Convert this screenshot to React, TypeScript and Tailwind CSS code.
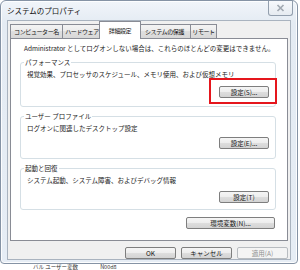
import type { ReactNode } from 'react';

const jp = "font-['Noto_Sans_CJK_JP','Noto_Sans',sans-serif]";

function Btn({ children, className = '', disabled = false }: { children: ReactNode; className?: string; disabled?: boolean }) {
  return (
    <div
      className={`h-[12px] flex items-center justify-center whitespace-nowrap rounded-[2px] border text-[6.5px] leading-none ${
        disabled
          ? 'border-[#b8bcc0] bg-[#f4f4f4] text-[#8f8f8f]'
          : 'border-[#7e7e7e] bg-[linear-gradient(#f5f5f5,#ededed_50%,#dedede_50%,#d3d3d3)] text-[#141414]'
      } ${className}`}
    >
      {children}
    </div>
  );
}

function Tab({ label, className = '', active = false }: { label: string; className?: string; active?: boolean }) {
  const base = 'flex items-center justify-center whitespace-nowrap border border-b-0 border-[#898c95] text-[6px] leading-none tracking-[-0.4px] text-[#111]';
  if (active) {
    return <div className={`relative z-10 -mb-px h-[18px] bg-white ${base} ${className}`}>{label}</div>;
  }
  return (
    <div className={`h-[14px] bg-[linear-gradient(#f3f3f3,#ebebeb_50%,#dfdfdf_50%,#d8d8d8)] ${base} ${className}`}>
      {label}
    </div>
  );
}

export default function App() {
  return (
    <div className={`w-[300px] h-[270px] bg-white overflow-hidden ${jp}`}>
      {/* window frame */}
      <div className="w-[298px] h-[264px] flex flex-col rounded-t-[6px] rounded-b-[4px] border border-[#8593a5] bg-[linear-gradient(#f1f5fa,#e4ebf3_22px,#e6edf5)] shadow-[inset_0_0_0_1px_rgba(255,255,255,0.85)]">
        {/* title bar */}
        <div className="h-[19px] shrink-0 flex items-start">
          <div className="pl-[6px] pt-[6px] text-[7.5px] leading-none text-[#111]">システムのプロパティ</div>
          <div className="ml-auto mr-[4px] w-[25px] h-[15px] flex items-center justify-center rounded-b-[3px] border border-t-0 border-[#939fae] bg-[linear-gradient(#f7f9fc,#e6ebf1)]">
            <svg width="9" height="8" viewBox="0 0 9 8">
              <path d="M1.5 1 L7.5 7 M7.5 1 L1.5 7" stroke="#a2a9b2" strokeWidth="1.7" />
            </svg>
          </div>
        </div>

        {/* client area */}
        <div className="mx-[6px] mb-[3px] flex-1 flex flex-col px-[2px] pt-[1px] border border-[#a9b3bf] bg-[#f0f0f0]">
          {/* tabs */}
          <div className="relative z-10 h-[16px] flex items-end">
            <Tab label="コンピューター名" className="w-[53px]" />
            <Tab label="ハードウェア" className="-ml-px w-[40px]" />
            <Tab label="詳細設定" active className="-ml-[3px] w-[42px]" />
            <Tab label="システムの保護" className="-ml-[3px] w-[53px]" />
            <Tab label="リモート" className="-ml-px w-[27px]" />
          </div>

          {/* tab panel */}
          <div className="h-[203px] border border-[#898c95] bg-white text-[6.5px] leading-[8px] text-[#1a1a1a]">
            <div className="pt-[5px] pl-[13px] whitespace-nowrap">Administrator としてログオンしない場合は、これらのほとんどの変更はできません。</div>

            <fieldset className="mt-[6px] ml-[9px] w-[256px] h-[49px] rounded-[3px] border border-[#d5dfe5] px-[6px]">
              <legend className="ml-[-3px] px-[1px] leading-[8px]">パフォーマンス</legend>
              <div className="mt-[4px]">視覚効果、プロセッサのスケジュール、メモリ使用、および仮想メモリ</div>
              <div className="mt-[8px] flex justify-end">
                <div className="relative">
                  <Btn className="w-[50px]">設定(S)...</Btn>
                  <div className="absolute -left-[10px] -top-[8px] w-[68px] h-[26px] border-2 border-[#e5161d]" />
                </div>
              </div>
            </fieldset>

            <fieldset className="mt-[5px] ml-[9px] w-[256px] h-[47px] rounded-[3px] border border-[#d5dfe5] px-[6px]">
              <legend className="ml-[-3px] px-[1px] leading-[8px]">ユーザー プロファイル</legend>
              <div className="mt-[4px]">ログオンに関連したデスクトップ設定</div>
              <div className="mt-[5px] flex justify-end">
                <Btn className="w-[50px]">設定(E)...</Btn>
              </div>
            </fieldset>

            <fieldset className="mt-[5px] ml-[9px] w-[256px] h-[46px] rounded-[3px] border border-[#d5dfe5] px-[6px]">
              <legend className="ml-[-3px] px-[1px] leading-[8px]">起動と回復</legend>
              <div className="mt-[4px]">システム起動、システム障害、およびデバッグ情報</div>
              <div className="mt-[7px] flex justify-end">
                <Btn className="w-[50px]">設定(T)</Btn>
              </div>
            </fieldset>

            <div className="mt-[7px] ml-[9px] w-[256px] pr-px flex justify-end">
              <Btn className="w-[89px]">環境変数(N)...</Btn>
            </div>
          </div>

          {/* dialog buttons */}
          <div className="mt-[6px] flex justify-end gap-[5px]">
            <Btn className="w-[51px]">OK</Btn>
            <Btn className="w-[51px]">キャンセル</Btn>
            <Btn disabled className="w-[51px]">適用(A)</Btn>
          </div>
        </div>
      </div>

      {/* window behind */}
      <div className="pl-[33px] flex gap-[22px] text-[5.5px] leading-[6px] text-[#333]">
        <span>バル ユーザー変数</span>
        <span>N00d8</span>
      </div>
    </div>
  );
}
